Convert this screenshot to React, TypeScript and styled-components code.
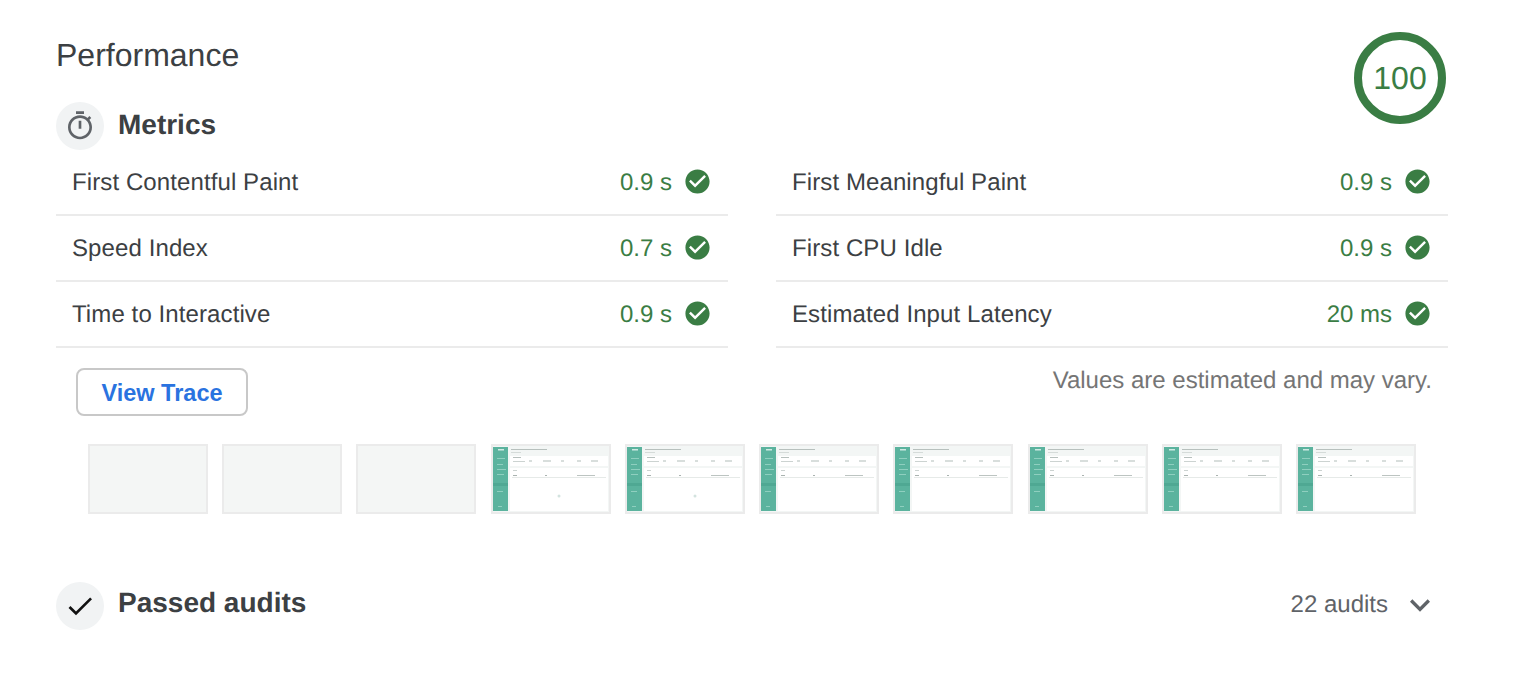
import React from 'react';
import styled, { createGlobalStyle } from 'styled-components';

const GlobalStyle = createGlobalStyle`
  html, body {
    margin: 0;
    background: #fff;
    font-family: "Liberation Sans", Arial, sans-serif;
    color: #3c4043;
    text-rendering: geometricPrecision;
  }
`;

const Page = styled.div`
  width: 1392px;
  padding: 32px 78px 54px 56px;
`;

const Header = styled.div`
  display: flex;
  justify-content: space-between;
  align-items: flex-start;
  padding-right: 2px;
  height: 118px;
`;

const HeaderLeft = styled.div`
  display: flex;
  flex-direction: column;
`;

const Title = styled.h1`
  margin: 3px 0 27px;
  font-size: 32px;
  line-height: 40px;
  font-weight: 400;
  color: #3c4043;
`;

const SectionHead = styled.div`
  display: flex;
  align-items: center;
  gap: 14px;
`;

const IconCircle = styled.div`
  width: 48px;
  height: 48px;
  border-radius: 50%;
  background: #f1f3f4;
  display: flex;
  align-items: center;
  justify-content: center;
  flex-shrink: 0;
`;

const SectionTitle = styled.h2<{ $lift: number }>`
  margin: 0 0 ${(p) => p.$lift}px;
  font-size: 28px;
  line-height: 36px;
  font-weight: 700;
  color: #3c4043;
`;

const Gauge = styled.div`
  width: 92px;
  height: 92px;
  display: flex;
  align-items: center;
  justify-content: center;
  font-size: 32px;
  color: #3a7d44;
  box-sizing: border-box;
  border: 8px solid #3a7d44;
  border-radius: 50%;
`;

const MetricGrid = styled.div`
  display: grid;
  grid-template-columns: 672px 672px;
  column-gap: 48px;
`;

const MetricRow = styled.div`
  display: flex;
  align-items: center;
  height: 64px;
  padding: 0 16px 0 16px;
  border-bottom: 2px solid #ebebeb;
  font-size: 24px;
`;

const MetricName = styled.span`
  flex: 1;
  padding-top: 2px;
  letter-spacing: 0.1px;
  color: #3c4043;
`;

const MetricValue = styled.span`
  padding-top: 2px;
  color: #3a7d44;
  margin-right: 11px;
`;

const CheckWrap = styled.span`
  display: flex;
  width: 29px;
  height: 29px;
  margin-top: -2px;
  color: #3a7d44;
`;

const ActionRow = styled.div`
  display: flex;
  justify-content: space-between;
  align-items: flex-start;
  padding: 20px 16px 0 20px;
`;

const TraceButton = styled.button`
  width: 172px;
  height: 48px;
  box-sizing: border-box;
  background: #fff;
  border: 2px solid #c8c8c8;
  border-radius: 8px;
  color: #2a73e0;
  font-family: inherit;
  font-size: 23.5px;
  font-weight: 700;
  padding: 3px 0 0;
`;

const Note = styled.div`
  font-size: 24px;
  line-height: 28px;
  color: #757575;
  margin-top: -1px;
`;

const Filmstrip = styled.div`
  display: flex;
  justify-content: space-between;
  width: 1328px;
  margin: 28px 0 0 32px;
`;

const Frame = styled.div`
  width: 120px;
  height: 70px;
  box-sizing: border-box;
  border: 2px solid #ebebeb;
  background: #f4f6f5;
  display: flex;
`;

const PassedHead = styled.div`
  display: flex;
  align-items: center;
  gap: 14px;
  margin-top: 68px;
`;

const AuditCount = styled.span`
  margin: 0 0 3px auto;
  font-size: 24px;
  color: #5f6368;
`;

const Chevron = styled.span`
  display: flex;
  width: 40px;
  height: 40px;
  margin: 0 8px 2px -2px;
  color: #5f6368;
`;

const metrics = [
  ['First Contentful Paint', '0.9 s'],
  ['First Meaningful Paint', '0.9 s'],
  ['Speed Index', '0.7 s'],
  ['First CPU Idle', '0.9 s'],
  ['Time to Interactive', '0.9 s'],
  ['Estimated Input Latency', '20 ms'],
];

// frames 0-2 are blank, the page paints from the fourth one on
const frames = [false, false, false, 'a', 'b', 'c', 'c', 'c', 'c', 'c'] as const;

const CheckIcon = () => (
  <svg viewBox="0 0 24 24" width="29" height="29" fill="currentColor">
    <path d="M12 2C6.48 2 2 6.48 2 12s4.48 10 10 10 10-4.48 10-10S17.52 2 12 2zm-2 15l-5-5 1.41-1.41L10 14.17l7.59-7.59L19 8l-9 9z" />
  </svg>
);

const Shot = ({ spinner }: { spinner?: number }) => (
  <svg viewBox="0 0 116 66" width="116" height="66">
    <rect width="116" height="66" fill="#f3f6f5" />
    <rect x="0" y="1" width="15" height="64" fill="#5bb39e" />
    <rect x="0" y="37" width="15" height="3" fill="#4fa893" />
    <rect x="5" y="3" width="6" height="1.5" fill="#cfeae3" />
    <rect x="4" y="12" width="8" height="1" fill="#8fcfbf" />
    <rect x="4" y="18" width="6" height="1" fill="#8fcfbf" />
    <rect x="4" y="23" width="9" height="1" fill="#8fcfbf" />
    <rect x="4" y="28" width="7" height="1" fill="#8fcfbf" />
    <rect x="4" y="45" width="6" height="1" fill="#8fcfbf" />
    <rect x="5" y="60" width="4" height="1" fill="#8fcfbf" />
    <rect x="18" y="3" width="36" height="1" fill="#b7c0bd" />
    <rect x="18" y="6" width="10" height="1" fill="#d5dbd9" />
    <rect x="17" y="10" width="98" height="10" fill="#ffffff" />
    <rect x="20" y="11" width="8" height="1" fill="#b7c0bd" />
    <rect x="20" y="15" width="12" height="1" fill="#ccd3d1" />
    <rect x="36" y="14" width="3" height="2" fill="#d8dedc" />
    <rect x="50" y="14" width="8" height="2" fill="#d8dedc" />
    <rect x="68" y="14" width="3" height="2" fill="#d8dedc" />
    <rect x="84" y="14" width="4" height="2" fill="#d8dedc" />
    <rect x="98" y="14" width="7" height="2" fill="#d8dedc" />
    <rect x="17" y="22" width="98" height="43" fill="#ffffff" />
    <rect x="20" y="24" width="4" height="1" fill="#ccd3d1" />
    <rect x="20" y="29" width="4" height="1" fill="#aab3b0" />
    <rect x="52" y="29" width="2" height="1" fill="#aab3b0" />
    <rect x="84" y="29" width="18" height="1" fill="#bcc4c1" />
    <rect x="19" y="31" width="94" height="1" fill="#e6eae8" />
    {spinner ? <circle cx={spinner} cy="50" r="1.5" fill="#d3e3df" /> : null}
  </svg>
);

const App: React.FC = () => (
  <Page>
    <GlobalStyle />
    <Header>
      <HeaderLeft>
        <Title>Performance</Title>
        <SectionHead>
          <IconCircle>
            <svg viewBox="0 0 24 24" width="32" height="32" fill="#5f6368">
              <path d="M15 1H9v2h6V1zm-4 13h2V8h-2v6zm8.03-6.61l1.42-1.42c-.43-.51-.9-.99-1.41-1.41l-1.42 1.42C16.07 4.74 14.12 4 12 4c-4.97 0-9 4.03-9 9s4.03 9 9 9 9-4.03 9-9c0-2.12-.74-4.07-1.97-5.61zM12 20c-3.87 0-7-3.13-7-7s3.13-7 7-7 7 3.13 7 7-3.13 7-7 7z" />
            </svg>
          </IconCircle>
          <SectionTitle $lift={2}>Metrics</SectionTitle>
        </SectionHead>
      </HeaderLeft>
      <Gauge>100</Gauge>
    </Header>

    <MetricGrid>
      {metrics.map(([name, value]) => (
        <MetricRow key={name}>
          <MetricName>{name}</MetricName>
          <MetricValue>{value}</MetricValue>
          <CheckWrap>
            <CheckIcon />
          </CheckWrap>
        </MetricRow>
      ))}
    </MetricGrid>

    <ActionRow>
      <TraceButton>View Trace</TraceButton>
      <Note>Values are estimated and may vary.</Note>
    </ActionRow>

    <Filmstrip>
      {frames.map((kind, i) => (
        <Frame key={i}>
          {kind && <Shot spinner={kind === 'a' ? 66 : kind === 'b' ? 68 : undefined} />}
        </Frame>
      ))}
    </Filmstrip>

    <PassedHead>
      <IconCircle>
        <svg viewBox="0 0 24 24" width="32" height="32" fill="#111">
          <path d="M9 16.17L4.83 12l-1.42 1.42L9 19 21 7l-1.41-1.41z" />
        </svg>
      </IconCircle>
      <SectionTitle $lift={6}>Passed audits</SectionTitle>
      <AuditCount>22 audits</AuditCount>
      <Chevron>
        <svg viewBox="0 0 24 24" width="40" height="40" fill="currentColor">
          <path d="M7.41 8.59L12 13.17l4.59-4.58L18 10l-6 6-6-6 1.41-1.41z" />
        </svg>
      </Chevron>
    </PassedHead>
  </Page>
);

export default App;
